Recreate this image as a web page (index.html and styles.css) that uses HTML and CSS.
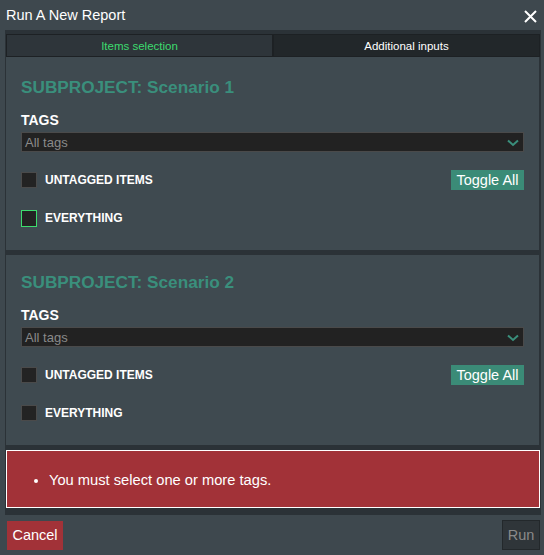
FILE: index.html
```html
<!DOCTYPE html>
<html>
<head>
<meta charset="utf-8">
<link rel="stylesheet" href="styles.css">
</head>
<body>
<div class="dialog">
  <div class="header">
    <span class="title">Run A New Report</span>
    <svg class="close" width="13" height="13" viewBox="0 0 13 13"><path d="M1 1L12 12M12 1L1 12" stroke="#ffffff" stroke-width="2" fill="none"/></svg>
  </div>
  <div class="body">
    <div class="tabs">
      <div class="tab active">Items selection</div>
      <div class="tab">Additional inputs</div>
    </div>
    <div class="panel first">
      <div class="sub-title">SUBPROJECT: Scenario 1</div>
      <div class="label">TAGS</div>
      <div class="select"><span>All tags</span><svg width="12" height="8" viewBox="0 0 12 8"><path d="M1 1.5L6 6L11 1.5" stroke="#3a8f7c" stroke-width="2" fill="none"/></svg></div>
      <div class="row">
        <div class="check"></div><span class="clabel">UNTAGGED ITEMS</span>
        <button class="toggle">Toggle All</button>
      </div>
      <div class="row r2">
        <div class="check focus"></div><span class="clabel">EVERYTHING</span>
      </div>
    </div>
    <div class="panel">
      <div class="sub-title">SUBPROJECT: Scenario 2</div>
      <div class="label">TAGS</div>
      <div class="select"><span>All tags</span><svg width="12" height="8" viewBox="0 0 12 8"><path d="M1 1.5L6 6L11 1.5" stroke="#3a8f7c" stroke-width="2" fill="none"/></svg></div>
      <div class="row">
        <div class="check"></div><span class="clabel">UNTAGGED ITEMS</span>
        <button class="toggle">Toggle All</button>
      </div>
      <div class="row r2">
        <div class="check"></div><span class="clabel">EVERYTHING</span>
      </div>
    </div>
    <div class="error">
      <ul><li>You must select one or more tags.</li></ul>
    </div>
  </div>
  <div class="footer">
    <button class="cancel">Cancel</button>
    <button class="run">Run</button>
  </div>
</div>
</body>
</html>
```
FILE: styles.css
```css
* { box-sizing: border-box; }
html, body { margin: 0; padding: 0; background: #111; }
body { font-family: "Liberation Sans", Arial, sans-serif; color: #fff; }
.dialog { width: 544px; height: 555px; background: #3e484e; display: flex; flex-direction: column; }
.header { height: 30px; display: flex; align-items: center; justify-content: space-between; padding: 0 7px 0 6px; }
.title { font-size: 14.5px; }
.close { margin-top: 2px; }
.body { background: #2b3237; margin: 0 3px 0 5px; padding: 4px 1px 7px 1px; display: flex; flex-direction: column; }
.tabs { display: flex; height: 23px; }
.tab { flex: 1; display: flex; align-items: center; justify-content: center; font-size: 11.5px; background: #22272a; border: 1px solid #1d2124; color: #fff; }
.tab.active { background: #2e353a; color: #3ddc6e; }
.panel { background: #3f4a50; margin-right: 1px; padding: 17px 15px 0 15px; height: 190px; margin-top: 5px; }
.panel.first { margin-top: 0; height: 193px; padding-top: 20px; }
.sub-title { color: #3a8f7c; font-weight: bold; font-size: 17.2px; line-height: 20px; }
.label { font-weight: bold; font-size: 14px; line-height: 16px; margin-top: 15px; }
.select { margin-top: 4px; height: 20px; background: #222222; border: 1px solid #4a4a4a; display: flex; align-items: center; justify-content: space-between; padding: 0 4px 0 3px; font-size: 13px; color: #8a8a8a; }
.select svg { margin-top: 1px; }
.row { display: flex; align-items: center; height: 20px; margin-top: 18px; }
.row.r2 { margin-top: 18px; }
.check { width: 16px; height: 16px; background: #232323; border: 1px solid #4a4a4a; }
.check.focus { border-color: #3ddc6e; height: 17px; }
.clabel { font-weight: bold; font-size: 12px; margin-left: 8px; flex: 1; }
.toggle { background: #3b8b77; color: #fff; border: none; font-family: inherit; font-size: 14.5px; height: 20px; padding: 0 3px; width: 73px; }
.error { margin-top: 5px; background: #a23238; border: 1px solid #ffffff; height: 58px; display: flex; align-items: center; }
.error ul { margin: 0; padding-left: 42px; font-size: 14.7px; padding-top: 1px; }
.footer { flex: 1; display: flex; align-items: center; justify-content: space-between; padding: 0 4px 0 7px; }
.cancel { background: #a23238; color: #fff; border: none; font-family: inherit; font-size: 14.5px; height: 29px; width: 56px; padding: 0; }
.run { background: #2f3539; color: #8a8a8a; border: 1px solid #23282b; font-family: inherit; font-size: 14.5px; height: 30px; width: 38px; padding: 0; }
```
